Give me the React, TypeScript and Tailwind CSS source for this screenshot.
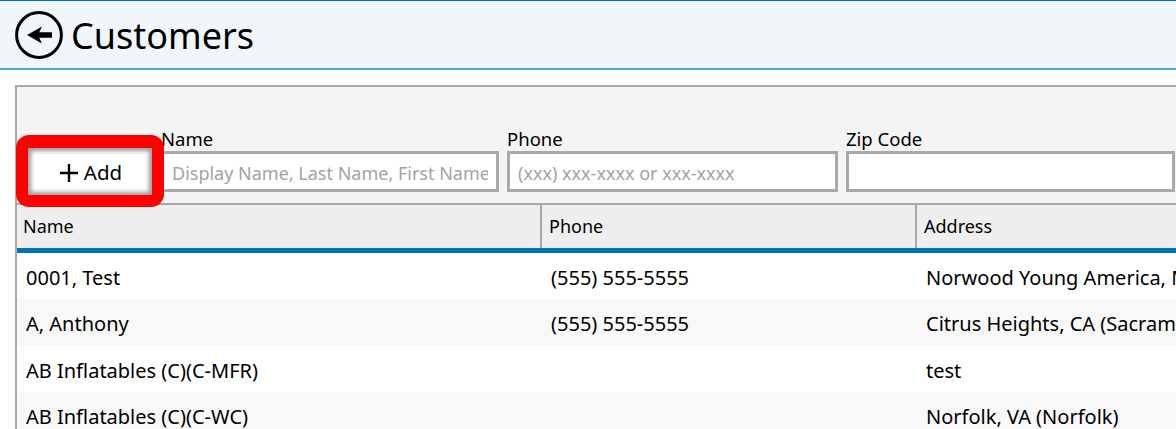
import React from 'react';

const rows = [
  { name: '0001, Test', phone: '(555) 555-5555', address: 'Norwood Young America, MN (Minneapolis)' },
  { name: 'A, Anthony', phone: '(555) 555-5555', address: 'Citrus Heights, CA (Sacramento)' },
  { name: 'AB Inflatables (C)(C-MFR)', phone: '', address: 'test' },
  { name: 'AB Inflatables (C)(C-WC)', phone: '', address: 'Norfolk, VA (Norfolk)' },
];

const Field = ({ label, placeholder, width }: { label: string; placeholder?: string; width: string }) => (
  <div className={`flex flex-col shrink-0 ${width}`}>
    <div className="h-[27px] text-[18.5px] leading-[29px] text-black">{label}</div>
    <div className="h-[41px] border-[3px] border-[#a9a9a9] bg-white px-[8px] text-[18px] leading-[39px] text-[#a3a3a3]">
      <div className="h-full overflow-hidden whitespace-nowrap">{placeholder}</div>
    </div>
  </div>
);

const App: React.FC = () => {
  return (
    <div className="relative w-[1176px] h-[429px] overflow-hidden bg-white font-['Noto_Sans','Open_Sans',sans-serif]">
      {/* Title bar */}
      <div className="h-[70px] bg-[#f1f6fa] border-t border-t-[#0072bc] border-b-2 border-b-[#4ea3d9] flex items-center pl-[15px] gap-[8px]">
        <svg width="48" height="48" viewBox="0 0 48 48" fill="none" className="shrink-0">
          <circle cx="24" cy="24" r="22.4" stroke="#000" strokeWidth="3" />
          <path d="M22 24H37" stroke="#000" strokeWidth="5.5" />
          <path d="M12 24L27 15.5L23 24L27 32.5Z" fill="#000" />
        </svg>
        <div className="text-[36px] leading-[50px] pt-[2px] text-black">Customers</div>
      </div>

      {/* Panel */}
      <div className="ml-[15px] mt-[15px] h-[400px] border-l-[2px] border-t-[2px] border-[#a9a9a9] bg-[#f4f4f4]">
        <div className="h-[116px] flex pt-[37px] overflow-hidden">
          <div className="w-[144px] shrink-0" />
          <div className="flex gap-[8px]">
            <Field label="Name" placeholder="Display Name, Last Name, First Name" width="w-[338px]" />
            <Field label="Phone" placeholder="(xxx) xxx-xxxx or xxx-xxxx" width="w-[331px]" />
            <Field label="Zip Code" width="w-[329px]" />
          </div>
        </div>

        {/* Table header */}
        <div className="h-[50px] flex bg-[#eeeeee] border-t-[2px] border-[#a9a9a9] border-b-[5px] border-b-[#0072b8] text-[18px] leading-[43px] text-black">
          <div className="w-[525px] shrink-0 pl-[6px] border-r-[2px] border-[#a9a9a9]">Name</div>
          <div className="w-[375px] shrink-0 pl-[7px] border-r-[2px] border-[#a9a9a9]">Phone</div>
          <div className="pl-[7px]">Address</div>
        </div>

        {/* Rows */}
        {rows.map((r, i) => (
          <div
            key={r.name}
            className={`h-[46.4px] flex text-[20px] leading-[50px] text-black whitespace-nowrap overflow-hidden ${i % 2 ? 'bg-[#f8f8f8]' : 'bg-white'}`}
          >
            <div className="w-[525px] shrink-0 pl-[9px]">{r.name}</div>
            <div className="w-[375px] shrink-0 pl-[9px]">{r.phone}</div>
            <div className="shrink-0 pl-[9px]">{r.address}</div>
          </div>
        ))}
      </div>

      {/* Add button, with the red callout drawn on it */}
      <div className="absolute left-[28px] top-[148px] w-[124px] h-[47px] pl-[2px] pt-[2px] bg-white shadow-[inset_0_0_4px_3px_rgba(0,0,0,0.4)] flex items-center justify-center gap-[6px] text-[20.5px] text-black">
        <svg width="18" height="18" viewBox="0 0 18 18" className="shrink-0">
          <path d="M9 0V18M0 9H18" stroke="#000" strokeWidth="2.4" />
        </svg>
        <span>Add</span>
      </div>
      <div className="absolute left-[16px] top-[135px] w-[148px] h-[72px] rounded-[13px] border-[12px] border-t-[13px] border-[#ff0000]" />
    </div>
  );
};

export default App;
